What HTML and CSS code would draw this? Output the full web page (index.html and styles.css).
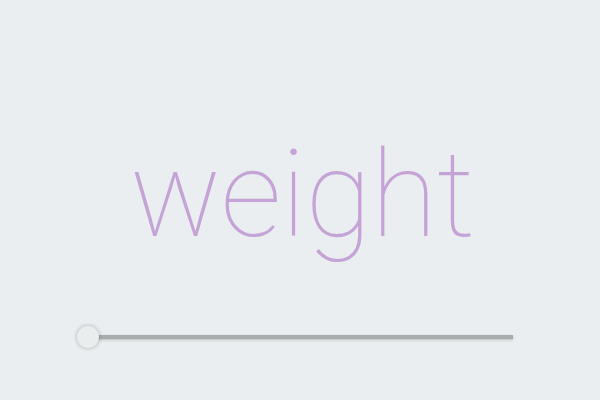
FILE: index.html
```html
<!DOCTYPE html>
<html>
<head>
<meta charset="utf-8">
<link rel="stylesheet" href="styles.css">
</head>
<body>
<div class="stage">
  <div class="word">weight</div>
  <div class="slider">
    <div class="track"></div>
    <div class="thumb"></div>
  </div>
</div>
</body>
</html>
```
FILE: styles.css
```css
html, body { margin: 0; padding: 0; }
body { background: #eaeef0; width: 600px; height: 400px; overflow: hidden; }
.stage { display: flex; flex-direction: column; align-items: center; }
.word {
  font-family: Roboto, "Helvetica Neue", sans-serif;
  font-weight: 100;
  font-size: 121px;
  color: #c5a3d6;
  line-height: 1;
  letter-spacing: -0.6px;
  margin-top: 135px;
  margin-left: 4px;
}
.slider { position: relative; width: 436px; height: 24px; margin-top: 69px; margin-left: -10px; }
.track {
  position: absolute; left: 10px; right: 0; top: 10px; height: 4px;
  background: #a9acad; box-shadow: 0 1px 3px rgba(0,0,0,0.2);
}
.thumb {
  position: absolute; left: 0; top: 1px; width: 22px; height: 22px; border-radius: 50%;
  background: #e9edee; box-shadow: 0 0 4px rgba(0,0,0,0.28);
}
```
